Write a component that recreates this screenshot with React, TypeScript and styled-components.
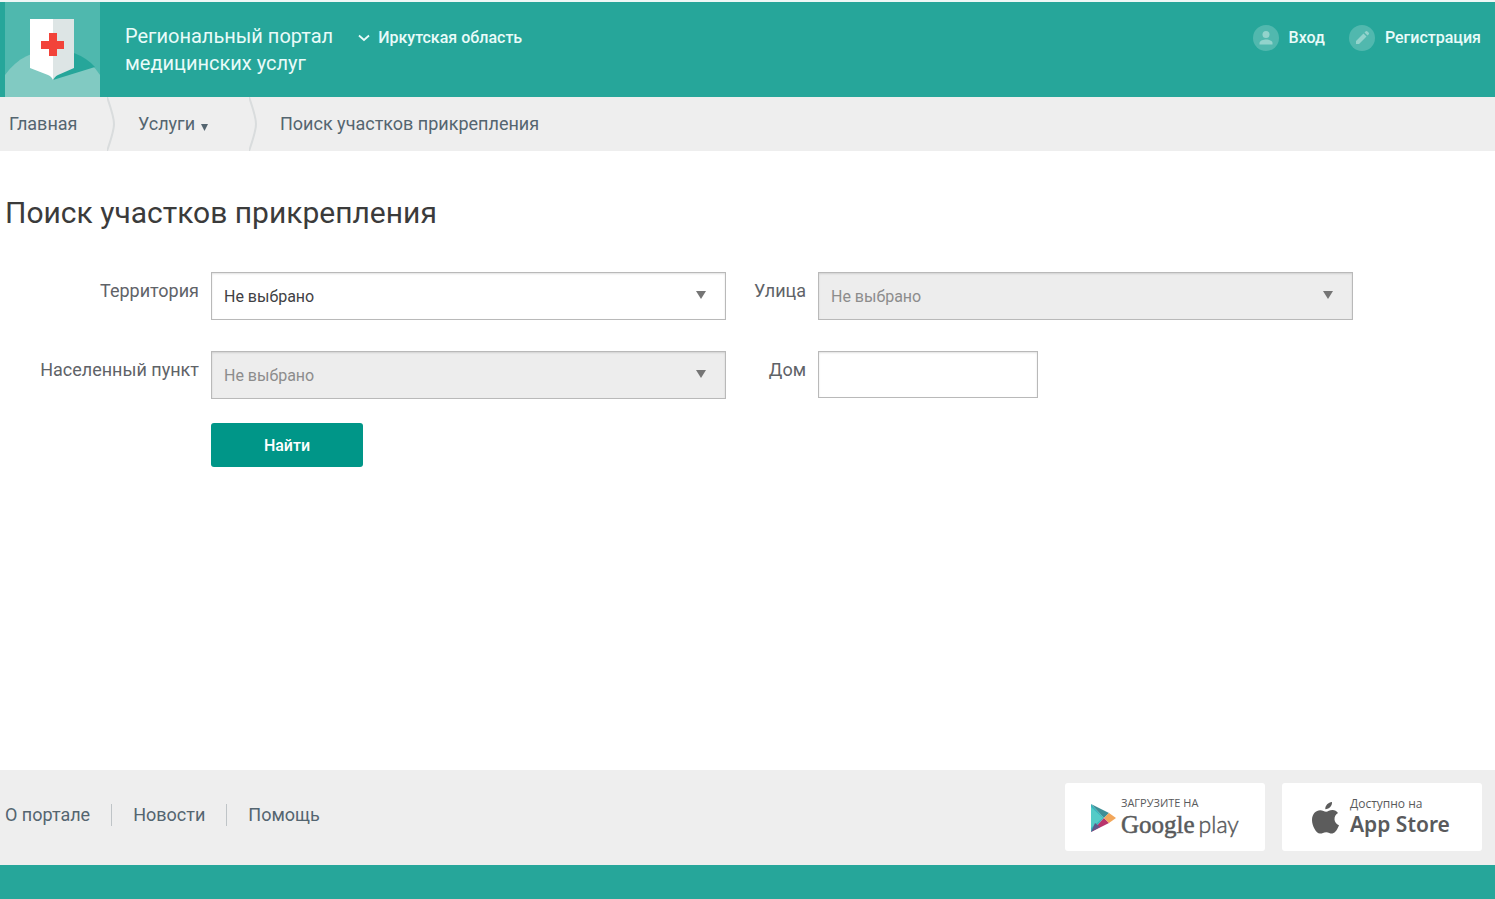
import React from "react";
import styled, { createGlobalStyle } from "styled-components";

const GlobalStyle = createGlobalStyle`
  *, *::before, *::after { box-sizing: border-box; }
  body {
    margin: 0;
    background: #fff;
    font-family: Roboto, "Liberation Sans", sans-serif;
    color: #3f4144;
  }
  a { color: inherit; text-decoration: none; }
`;

const teal = "#26a69a";
const grey = "#eeeeee";
const slate = "#546570";

const Page = styled.div`
  display: flex;
  flex-direction: column;
  min-height: 100vh;
`;

const Header = styled.header`
  display: flex;
  align-items: flex-start;
  padding: 0 14px 0 5px;
  border-top: 2px solid #eef7f6;
  background: ${teal};
  color: #e9fbf9;
`;

const LogoLink = styled.a`
  display: block;
  height: 95px;
  margin-right: 25px;
`;

const PortalName = styled.a`
  padding-top: 21px;
  font-size: 20px;
  line-height: 27px;
`;

const Region = styled.button`
  display: flex;
  align-items: center;
  gap: 8px;
  margin: 25px 0 0 25px;
  padding: 0;
  border: 0;
  background: none;
  color: inherit;
  font: 500 16px/22px Roboto, sans-serif;
  cursor: pointer;
`;

const Account = styled.nav`
  display: flex;
  gap: 24px;
  margin: 22px 0 0 auto;
`;

const AccountLink = styled.a`
  display: flex;
  align-items: center;
  gap: 10px;
  font-size: 16px;
  font-weight: 500;
  line-height: 28px;
`;

const Breadcrumbs = styled.nav`
  display: flex;
  align-items: center;
  height: 54px;
  padding-left: 9px;
  background: ${grey};
  color: ${slate};
  font-size: 18px;
  line-height: 24px;
`;

const Crumb = styled.a<{ $width?: number }>`
  display: flex;
  align-items: center;
  gap: 6px;
  min-width: ${(p) => (p.$width ? `${p.$width}px` : "auto")};
`;

const CrumbArrow = styled.svg`
  flex: none;
  margin-right: 22px;
`;

const Main = styled.main`
  flex: 1;
  padding: 42px 142px 40px 5px;
`;

const Title = styled.h1`
  margin: 0 0 39px;
  color: #3b3b3b;
  font-size: 30px;
  font-weight: 400;
  line-height: 40px;
`;

const Form = styled.form`
  display: grid;
  grid-template-columns: 194px minmax(0, 515fr) 68px minmax(0, 535fr);
  column-gap: 12px;
  align-items: start;
`;

const Label = styled.label`
  padding-top: 6px;
  color: #5f6368;
  font-size: 18px;
  line-height: 26px;
  text-align: right;
`;

const SelectBox = styled.div`
  position: relative;
  margin-bottom: 31px;
`;

const Select = styled.select`
  appearance: none;
  display: block;
  width: 100%;
  height: 48px;
  padding: 2px 40px 0 12px;
  border: 1px solid #b9b9b9;
  border-radius: 0;
  background: #fff;
  box-shadow: inset 0 1px 2px rgba(0, 0, 0, 0.12);
  color: #3f4144;
  font: 400 16px/22px Roboto, sans-serif;
  opacity: 1;
  &:disabled {
    background: #ededed;
    color: #8c8c8c;
  }
`;

const SelectArrow = styled.svg`
  position: absolute;
  top: 19px;
  right: 19px;
  pointer-events: none;
`;

const HouseInput = styled.input`
  width: 220px;
  height: 47px;
  padding: 0 12px;
  border: 1px solid #b9b9b9;
  border-radius: 0;
  box-shadow: inset 0 1px 2px rgba(0, 0, 0, 0.12);
  font: 400 16px/22px Roboto, sans-serif;
`;

const Submit = styled.button`
  grid-column: 2;
  justify-self: start;
  width: 152px;
  height: 44px;
  margin-top: -7px;
  padding: 2px 0 0;
  border: 0;
  border-radius: 3px;
  background: #009688;
  color: #fff;
  font: 500 16px/22px Roboto, sans-serif;
  cursor: pointer;
`;

const Footer = styled.footer`
  border-bottom: 34px solid ${teal};
  background: ${grey};
`;

const FooterRow = styled.div`
  display: flex;
  align-items: flex-start;
  justify-content: space-between;
  min-height: 95px;
  padding: 13px 13px 14px 5px;
`;

const FooterNav = styled.nav`
  display: flex;
  padding-top: 21px;
  color: ${slate};
  font-size: 18px;
  line-height: 22px;
`;

const FooterLink = styled.a`
  padding-right: 21px;
  & + & {
    padding-left: 21px;
    border-left: 1px solid #bfc4c7;
  }
`;

const Stores = styled.div`
  display: flex;
  gap: 17px;
`;

const Store = styled.a<{ $inset: number; $gap: number }>`
  display: flex;
  align-items: center;
  gap: ${(p) => p.$gap}px;
  width: 200px;
  height: 68px;
  padding-left: ${(p) => p.$inset}px;
  border-radius: 3px;
  background: #fff;
  color: #595a5c;
  white-space: nowrap;
`;

const StoreText = styled.span`
  display: flex;
  flex-direction: column;
`;

const StoreHint = styled.span<{ $size: number }>`
  font: 400 ${(p) => p.$size}px/14px "Open Sans", sans-serif;
`;

const GoogleName = styled.span`
  display: flex;
  align-items: baseline;
  gap: 4px;
  font: 400 25px/28px "Liberation Serif", serif;
  -webkit-text-stroke: 0.5px currentColor;
`;

const PlayName = styled.span`
  font: 300 23px/28px Lato, sans-serif;
`;

const AppleName = styled.span`
  font: 600 21px/26px "Noto Sans", sans-serif;
`;

const StoreIcon = styled.svg`
  flex: none;
  margin-top: 2px;
`;

const Logo = () => (
  <svg width="95" height="95" viewBox="0 0 95 95" aria-hidden="true">
    <rect width="95" height="95" fill="#4fb8ae" />
    <path d="M0 73C12 56 29 48 48 48s36 8 47 25v22H0z" fill="#81cac2" />
    <path d="M69 51q13 5 21 14L48 78z" fill="#26a69a" />
    <path d="M25 17h23v61c-1-2-2-4-5-5l-18-7z" fill="#fff" />
    <path d="M48 17h21v49l-16 7c-3 1-4 3-5 5z" fill="#dde5e5" />
    <path d="M44 31h8v8h7v8h-7v7h-8v-7h-8v-8h8z" fill="#f2433a" />
  </svg>
);

const UserIcon = () => (
  <svg width="26" height="26" viewBox="0 0 26 26" aria-hidden="true">
    <circle cx="13" cy="13" r="13" fill="#51b8ae" />
    <circle cx="13" cy="9.5" r="3.5" fill="#93d3cc" />
    <path d="M6.500 19.500v-1.500c0-2.500 4.300-3.500 6.500-3.500s6.500 1 6.500 3.500v1.500z" fill="#93d3cc" />
  </svg>
);

const PencilIcon = () => (
  <svg width="26" height="26" viewBox="0 0 26 26" aria-hidden="true">
    <circle cx="13" cy="13" r="13" fill="#51b8ae" />
    <path d="M7 19v-3l7.500-7.500 3 3L10 19zM15.500 7.500l1.300-1.300q.7-.5 1.400 0l1.600 1.600q.6.700 0 1.400l-1.300 1.300z" fill="#93d3cc" />
  </svg>
);

const Divider = () => (
  <CrumbArrow width="9" height="54" viewBox="0 0 9 54" fill="none" aria-hidden="true">
    <path d="M0 0Q7 20 7 27T0 54" stroke="#d9dcdd" strokeWidth="2" />
  </CrumbArrow>
);

type PickerProps = { id: string; disabled?: boolean };

const Picker = ({ id, disabled }: PickerProps) => (
  <SelectBox>
    <Select id={id} disabled={disabled}>
      <option>Не выбрано</option>
    </Select>
    <SelectArrow width="12" height="9" viewBox="0 0 12 9" aria-hidden="true">
      <path d="M1 0h10L6 8z" fill="#757575" />
    </SelectArrow>
  </SelectBox>
);

export default function App() {
  return (
    <Page>
      <GlobalStyle />
      <Header>
        <LogoLink href="#" aria-label="Главная">
          <Logo />
        </LogoLink>
        <PortalName href="#">
          Региональный портал
          <br />
          медицинских услуг
        </PortalName>
        <Region type="button">
          <svg width="12" height="8" viewBox="0 0 12 8" fill="none" aria-hidden="true">
            <path d="M1 1.500l5 4.500 5-4.500" stroke="currentColor" strokeWidth="1.800" />
          </svg>
          Иркутская область
        </Region>
        <Account>
          <AccountLink href="#">
            <UserIcon />
            Вход
          </AccountLink>
          <AccountLink href="#">
            <PencilIcon />
            Регистрация
          </AccountLink>
        </Account>
      </Header>
      <Breadcrumbs>
        <Crumb href="#" $width={98}>Главная</Crumb>
        <Divider />
        <Crumb href="#" $width={111}>
          Услуги
          <svg width="7" height="16" viewBox="0 0 7 16" aria-hidden="true">
            <path d="M0 8h7l-3.500 7z" fill="currentColor" />
          </svg>
        </Crumb>
        <Divider />
        <Crumb href="#">Поиск участков прикрепления</Crumb>
      </Breadcrumbs>
      <Main>
        <Title>Поиск участков прикрепления</Title>
        <Form>
          <Label htmlFor="territory">Территория</Label>
          <Picker id="territory" />
          <Label htmlFor="street">Улица</Label>
          <Picker id="street" disabled />
          <Label htmlFor="town">Населенный пункт</Label>
          <Picker id="town" disabled />
          <Label htmlFor="house">Дом</Label>
          <HouseInput id="house" type="text" />
          <Submit type="button">Найти</Submit>
        </Form>
      </Main>
      <Footer>
        <FooterRow>
          <FooterNav>
            <FooterLink href="#">О портале</FooterLink>
            <FooterLink href="#">Новости</FooterLink>
            <FooterLink href="#">Помощь</FooterLink>
          </FooterNav>
          <Stores>
            <Store href="#" $inset={26} $gap={5}>
              <StoreIcon width="25" height="28" viewBox="0 0 25 28" aria-hidden="true">
                <path d="M0 0l13 14L0 28z" fill="#36b5bd" />
                <path d="M0 0l18 9-5 5z" fill="#3f8f96" />
                <path d="M0 3l12 11L0 24z" fill="#54cbc7" />
                <path d="M0 28l13-14 5 5z" fill="#b9346b" />
                <path d="M0 28l4-9 5 4z" fill="#5d5a8c" />
                <path d="M18 9l7 5-7 5-5-5z" fill="#f2a65a" />
              </StoreIcon>
              <StoreText>
                <StoreHint $size={11}>ЗАГРУЗИТЕ НА</StoreHint>
                <GoogleName>
                  Google <PlayName>play</PlayName>
                </GoogleName>
              </StoreText>
            </Store>
            <Store href="#" $inset={30} $gap={11}>
              <StoreIcon width="27" height="32" viewBox="0 0 27 32" fill="#5c5c5c" aria-hidden="true">
                <path d="M20 0c.3 3.800-3 7.300-6.700 7.200C13 3.600 16.300.3 20 0z" />
                <path d="M26 11c-5 3-4.600 10 1 12.300-1.200 3.300-3.600 7.700-6.500 8.200-2.300.3-3.600-1.300-6.300-1.300s-4.100 1.500-6.200 1.400C4 31.300 0 23.600 0 18c0-6.200 4-9.700 8.200-9.800 2.500 0 4.200 1.500 5.900 1.500s3.700-1.800 6.600-1.700c2 .1 4 1 5.300 3z" />
              </StoreIcon>
              <StoreText>
                <StoreHint $size={12}>Доступно на</StoreHint>
                <AppleName>App Store</AppleName>
              </StoreText>
            </Store>
          </Stores>
        </FooterRow>
      </Footer>
    </Page>
  );
}
